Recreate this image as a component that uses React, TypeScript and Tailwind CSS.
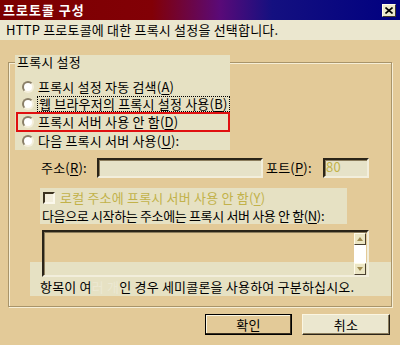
import React from 'react';

const tan = 'bg-[#e3ca98]';

const Radio = () => (
    <span className="block w-[12px] h-[12px] rounded-full bg-white border-2 border-t-[#8a7f68] border-l-[#8a7f68] border-r-[#f4efdc] border-b-[#f4efdc] flex-shrink-0" />
);

const U = ({ children }: { children: React.ReactNode }) => <span className="underline underline-offset-2">{children}</span>;

const Sunken = ({ className, children }: { className: string; children?: React.ReactNode }) => (
    <div
        className={`border-2 border-t-[#2a2418] border-l-[#2a2418] border-r-[#f2eedc] border-b-[#f2eedc] shadow-[inset_1px_1px_0_#8a7c5c] ${className}`}
    >
        {children}
    </div>
);

export default function App() {
    return (
        <div
            className={`w-[400px] h-[345px] overflow-hidden ${tan} text-black text-[13px] leading-[16px] tracking-[0.2px]`}
            style={{ fontFamily: '"Noto Sans CJK KR", "Noto Sans", sans-serif' }}
        >
            {/* title bar */}
            <div className="h-[20px] flex items-center justify-between pl-[3px] pr-[4px] bg-[linear-gradient(90deg,#7c0000_0%,#820006_38%,#5a0a78_55%,#141080_68%,#000080_100%)]">
                <span className="text-white font-bold text-[13px] tracking-[1px]">프로토콜 구성</span>
                <div className="w-[14px] h-[13px] bg-[#ece8cc] border border-t-[#fffbe8] border-l-[#fffbe8] border-r-[#40382a] border-b-[#40382a] flex items-center justify-center">
                    <svg width="8" height="7" viewBox="0 0 8 7">
                        <path d="M0.5 0.5 L7.5 6.5 M7.5 0.5 L0.5 6.5" stroke="#000" strokeWidth="1.6" />
                    </svg>
                </div>
            </div>

            {/* description */}
            <div className="h-[20px] bg-[#ebe7cf] pl-[6px] flex items-center">HTTP 프로토콜에 대한 프록시 설정을 선택합니다.</div>

            {/* group box */}
            <div className="relative mx-[8px] mt-[22px] h-[245px] border border-[#a8946a] shadow-[inset_1px_1px_0_#f6eed6,1px_1px_0_#f6eed6]">
                <div className="absolute left-[6px] top-[-8px] w-[215px] h-[15px] bg-[#e6e1c3] pl-[2px] leading-[14px]">프록시 설정</div>

                <div className="ml-[6px] w-[215px] bg-[#e6e1c3] pt-[15px] pb-[1px] leading-[14px]">
                    <div className="h-[18px] flex items-center pl-[7px] gap-[4px]">
                        <Radio />
                        <span>프록시 설정 자동 검색(<U>A</U>)</span>
                    </div>
                    <div className="h-[16px] flex items-center pl-[7px] gap-[3px]">
                        <Radio />
                        <span className="border border-dotted border-black h-[16px] flex-1 pl-[1px] whitespace-nowrap">
                            웹 브라우저의 프록시 설정 사용(<U>B</U>)
                        </span>
                    </div>
                    <div className="h-[20px] ml-[1px] border-2 border-[#e01010] flex items-center pl-[4px] gap-[4px]">
                        <Radio />
                        <span>프록시 서버 사용 안 함(<U>D</U>)</span>
                    </div>
                    <div className="h-[17px] flex items-center pl-[7px] gap-[4px]">
                        <Radio />
                        <span>다음 프록시 서버 사용(<U>U</U>):</span>
                    </div>
                </div>

                {/* address / port */}
                <div className="flex items-center mt-[8px] h-[20px]">
                    <span className="ml-[32px] w-[56px]">주소(<U>R</U>):</span>
                    <Sunken className="w-[166px] h-[20px] bg-[#e6e2c8]" />
                    <span className="ml-[3px] w-[57px]">포트(<U>P</U>):</span>
                    <Sunken className="w-[46px] h-[20px] bg-[#e6e2c8] text-[#c2b24a] pl-[1px] leading-[14px]">80</Sunken>
                </div>

                <div className="ml-[31px] w-[307px] mt-[10px] bg-[#e6e1c3] leading-[14px]">
                    <div className="h-[19px] flex items-center pl-[3px] gap-[5px]">
                        <span className="block w-[12px] h-[12px] bg-[#f2eedc] border-2 border-t-[#3a3220] border-l-[#3a3220] border-r-[#fbf8ec] border-b-[#fbf8ec]" />
                        <span className="text-[#c2b24a]">로컬 주소에 프록시 서버 사용 안 함(<U>Y</U>)</span>
                    </div>
                    <div className="h-[17px] flex items-center pl-[2px] whitespace-nowrap tracking-[-0.35px]">
                        다음으로 시작하는 주소에는 프록시 서버 사용 안 함(<U>N</U>):
                    </div>
                </div>

                <div className="ml-[21px] mr-0 mt-[6px] bg-[linear-gradient(to_bottom,transparent_32px,#e6e1c3_32px)]">
                    <Sunken className="ml-[12px] w-[327px] h-[47px] flex justify-end pr-[1px] pt-[1px]">
                        <div className="w-[12px] flex flex-col">
                            <div className="h-[12px] bg-[#ece6c4] border border-t-[#fffbe8] border-l-[#fffbe8] border-r-[#4a4030] border-b-[#4a4030] flex items-center justify-center">
                                <svg width="6" height="4" viewBox="0 0 6 4"><path d="M3 0 L6 4 L0 4 Z" fill="#a08c50" /></svg>
                            </div>
                            <div className="flex-1 bg-white" />
                            <div className="h-[12px] bg-[#ece6c4] border border-t-[#fffbe8] border-l-[#fffbe8] border-r-[#4a4030] border-b-[#4a4030] flex items-center justify-center">
                                <svg width="6" height="4" viewBox="0 0 6 4"><path d="M0 0 L6 0 L3 4 Z" fill="#a08c50" /></svg>
                            </div>
                        </div>
                    </Sunken>
                    <div className="h-[19px] pl-[10px] flex items-center whitespace-nowrap">
                        항목이 여<span className="text-[#ece8d2]">러 개</span>인 경우 세미콜론을 사용하여 구분하십시오.
                    </div>
                </div>
            </div>

            {/* buttons */}
            <div className="flex justify-end gap-[10px] mt-[7px] pr-[10px]">
                <button className="w-[87px] h-[21px] border border-black shadow-[inset_-1px_-1px_0_#3a3020,inset_1px_1px_0_#fbf6e2] bg-[#e3ca98] flex items-center justify-center">
                    확인
                </button>
                <button className="w-[88px] h-[21px] border border-t-[#fbf6e2] border-l-[#fbf6e2] border-r-[#2a2418] border-b-[#2a2418] shadow-[inset_-1px_-1px_0_#8a7c5c] bg-[#ebe7cf] flex items-center justify-center">
                    취소
                </button>
            </div>
        </div>
    );
}
